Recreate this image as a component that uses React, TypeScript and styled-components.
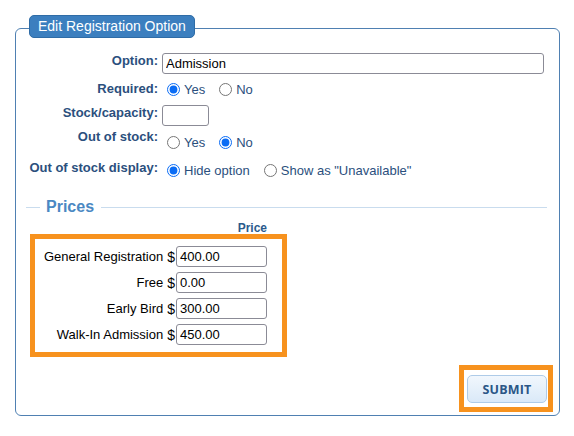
import styled, { createGlobalStyle } from "styled-components";

const GlobalStyle = createGlobalStyle`
  body {
    margin: 8px;
    font-family: "Liberation Sans", Arial, sans-serif;
    background: #ffffff;
  }
`;

const Panel = styled.fieldset`
  box-sizing: border-box;
  width: 545px;
  margin: 7px 0 0 7px;
  padding: 0 0 3px 0;
  border: 1px solid #4f80b2;
  border-radius: 6px;
  min-inline-size: auto;
`;

const Legend = styled.legend`
  margin-left: 13px;
  padding: 0 0 3px 0;
`;

const LegendBadge = styled.span`
  display: block;
  box-sizing: border-box;
  height: 23px;
  padding: 0 8px;
  background: #3c7fbf;
  border: 1px solid #2f6ca6;
  border-radius: 5px;
  color: #ffffff;
  font-size: 14px;
  line-height: 21px;
`;

const FormBody = styled.div`
  padding: 12px 15px 0 0;
`;

const Row = styled.div<{ $mt?: number }>`
  display: grid;
  grid-template-columns: 142px 1fr;
  column-gap: 4px;
  align-items: start;
  margin-top: ${(p) => p.$mt ?? 0}px;
`;

const FieldLabel = styled.label<{ $lh?: number }>`
  text-align: right;
  font-size: 13px;
  font-weight: 700;
  color: #2b4f7d;
  line-height: ${(p) => p.$lh ?? 16}px;
`;

const Controls = styled.div<{ $pt?: number }>`
  display: flex;
  align-items: center;
  padding-top: ${(p) => p.$pt ?? 0}px;
`;

const TextInput = styled.input<{ $w?: number }>`
  box-sizing: border-box;
  height: 21px;
  width: ${(p) => (p.$w ? `${p.$w}px` : "100%")};
  padding: 0 3px;
  border: 1px solid #8b8b96;
  border-radius: 3px;
  font-family: "Liberation Sans", Arial, sans-serif;
  font-size: 13px;
  color: #000000;
  outline: none;
`;

const RadioOption = styled.label`
  display: flex;
  align-items: center;
  height: 18px;
  margin-right: 9px;
  font-size: 13px;
  color: #2b4f7d;
`;

const Radio = styled.input`
  width: 13px;
  height: 13px;
  margin: 0 4px 0 5px;
  accent-color: #0a6cf5;
`;

const PricesHeader = styled.div`
  display: flex;
  align-items: center;
  height: 18px;
  margin: 19px -3px 0 10px;
`;

const Rule = styled.span<{ $w?: number }>`
  height: 1px;
  background: #c9dcee;
  ${(p) => (p.$w ? `width: ${p.$w}px;` : "flex: 1;")}
`;

const PricesTitle = styled.span`
  padding: 0 7px 0 6px;
  font-size: 16px;
  font-weight: 700;
  color: #4a88c3;
`;

const PriceTable = styled.div`
  width: 257px;
  margin: 7px 0 0 14px;
`;

const PriceCaption = styled.div`
  padding-right: 20px;
  text-align: right;
  font-size: 12px;
  line-height: 11px;
  font-weight: 700;
  color: #2b5a8c;
`;

const Highlight = styled.div`
  border: 5px solid #f7921e;
`;

const PriceBox = styled(Highlight)`
  display: flex;
  flex-direction: column;
  gap: 5px;
  padding: 7px 15px 7px 0;
`;

const PriceRow = styled.div`
  display: flex;
  justify-content: flex-end;
  align-items: center;
  font-size: 13px;
  color: #000000;
`;

const PriceName = styled.span`
  margin-right: 4px;
`;

const Dollar = styled.span`
  margin-right: 1px;
  font-size: 14px;
`;

const Footer = styled.div`
  display: flex;
  justify-content: flex-end;
  margin: 8px 6px 0 0;
`;

const SubmitFrame = styled(Highlight)`
  padding: 5px 1px 4px 3px;
`;

const SubmitButton = styled.button`
  box-sizing: border-box;
  width: 80px;
  height: 28px;
  border: 1px solid #aecbe8;
  border-radius: 5px;
  background: linear-gradient(#f1f7fd, #dae9f8);
  font-family: "Open Sans", "DejaVu Sans", sans-serif;
  font-size: 12.5px;
  font-weight: 700;
  color: #2a5687;
  letter-spacing: 0.2px;
  cursor: pointer;
`;

const prices = [
  { name: "General Registration", value: "400.00" },
  { name: "Free", value: "0.00" },
  { name: "Early Bird", value: "300.00" },
  { name: "Walk-In Admission", value: "450.00" },
];

export default function App() {
  return (
    <>
      <GlobalStyle />
      <Panel>
        <Legend>
          <LegendBadge>Edit Registration Option</LegendBadge>
        </Legend>
        <FormBody>
          <Row>
            <FieldLabel>Option:</FieldLabel>
            <Controls>
              <TextInput defaultValue="Admission" />
            </Controls>
          </Row>
          <Row $mt={6}>
            <FieldLabel $lh={18}>Required:</FieldLabel>
            <Controls>
              <RadioOption>
                <Radio type="radio" name="required" defaultChecked />
                Yes
              </RadioOption>
              <RadioOption>
                <Radio type="radio" name="required" />
                No
              </RadioOption>
            </Controls>
          </Row>
          <Row $mt={7}>
            <FieldLabel>Stock/capacity:</FieldLabel>
            <Controls>
              <TextInput $w={47} />
            </Controls>
          </Row>
          <Row $mt={3}>
            <FieldLabel>Out of stock:</FieldLabel>
            <Controls $pt={4}>
              <RadioOption>
                <Radio type="radio" name="oos" />
                Yes
              </RadioOption>
              <RadioOption>
                <Radio type="radio" name="oos" defaultChecked />
                No
              </RadioOption>
            </Controls>
          </Row>
          <Row $mt={10}>
            <FieldLabel $lh={14}>Out of stock display:</FieldLabel>
            <Controls>
              <RadioOption>
                <Radio type="radio" name="display" defaultChecked />
                Hide option
              </RadioOption>
              <RadioOption>
                <Radio type="radio" name="display" />
                Show as "Unavailable"
              </RadioOption>
            </Controls>
          </Row>

          <PricesHeader>
            <Rule $w={14} />
            <PricesTitle>Prices</PricesTitle>
            <Rule />
          </PricesHeader>

          <PriceTable>
            <PriceCaption>Price</PriceCaption>
            <PriceBox>
              {prices.map((p) => (
                <PriceRow key={p.name}>
                  <PriceName>{p.name}</PriceName>
                  <Dollar>$</Dollar>
                  <TextInput $w={91} defaultValue={p.value} />
                </PriceRow>
              ))}
            </PriceBox>
          </PriceTable>
        </FormBody>

        <Footer>
          <SubmitFrame>
            <SubmitButton type="button">SUBMIT</SubmitButton>
          </SubmitFrame>
        </Footer>
      </Panel>
    </>
  );
}
